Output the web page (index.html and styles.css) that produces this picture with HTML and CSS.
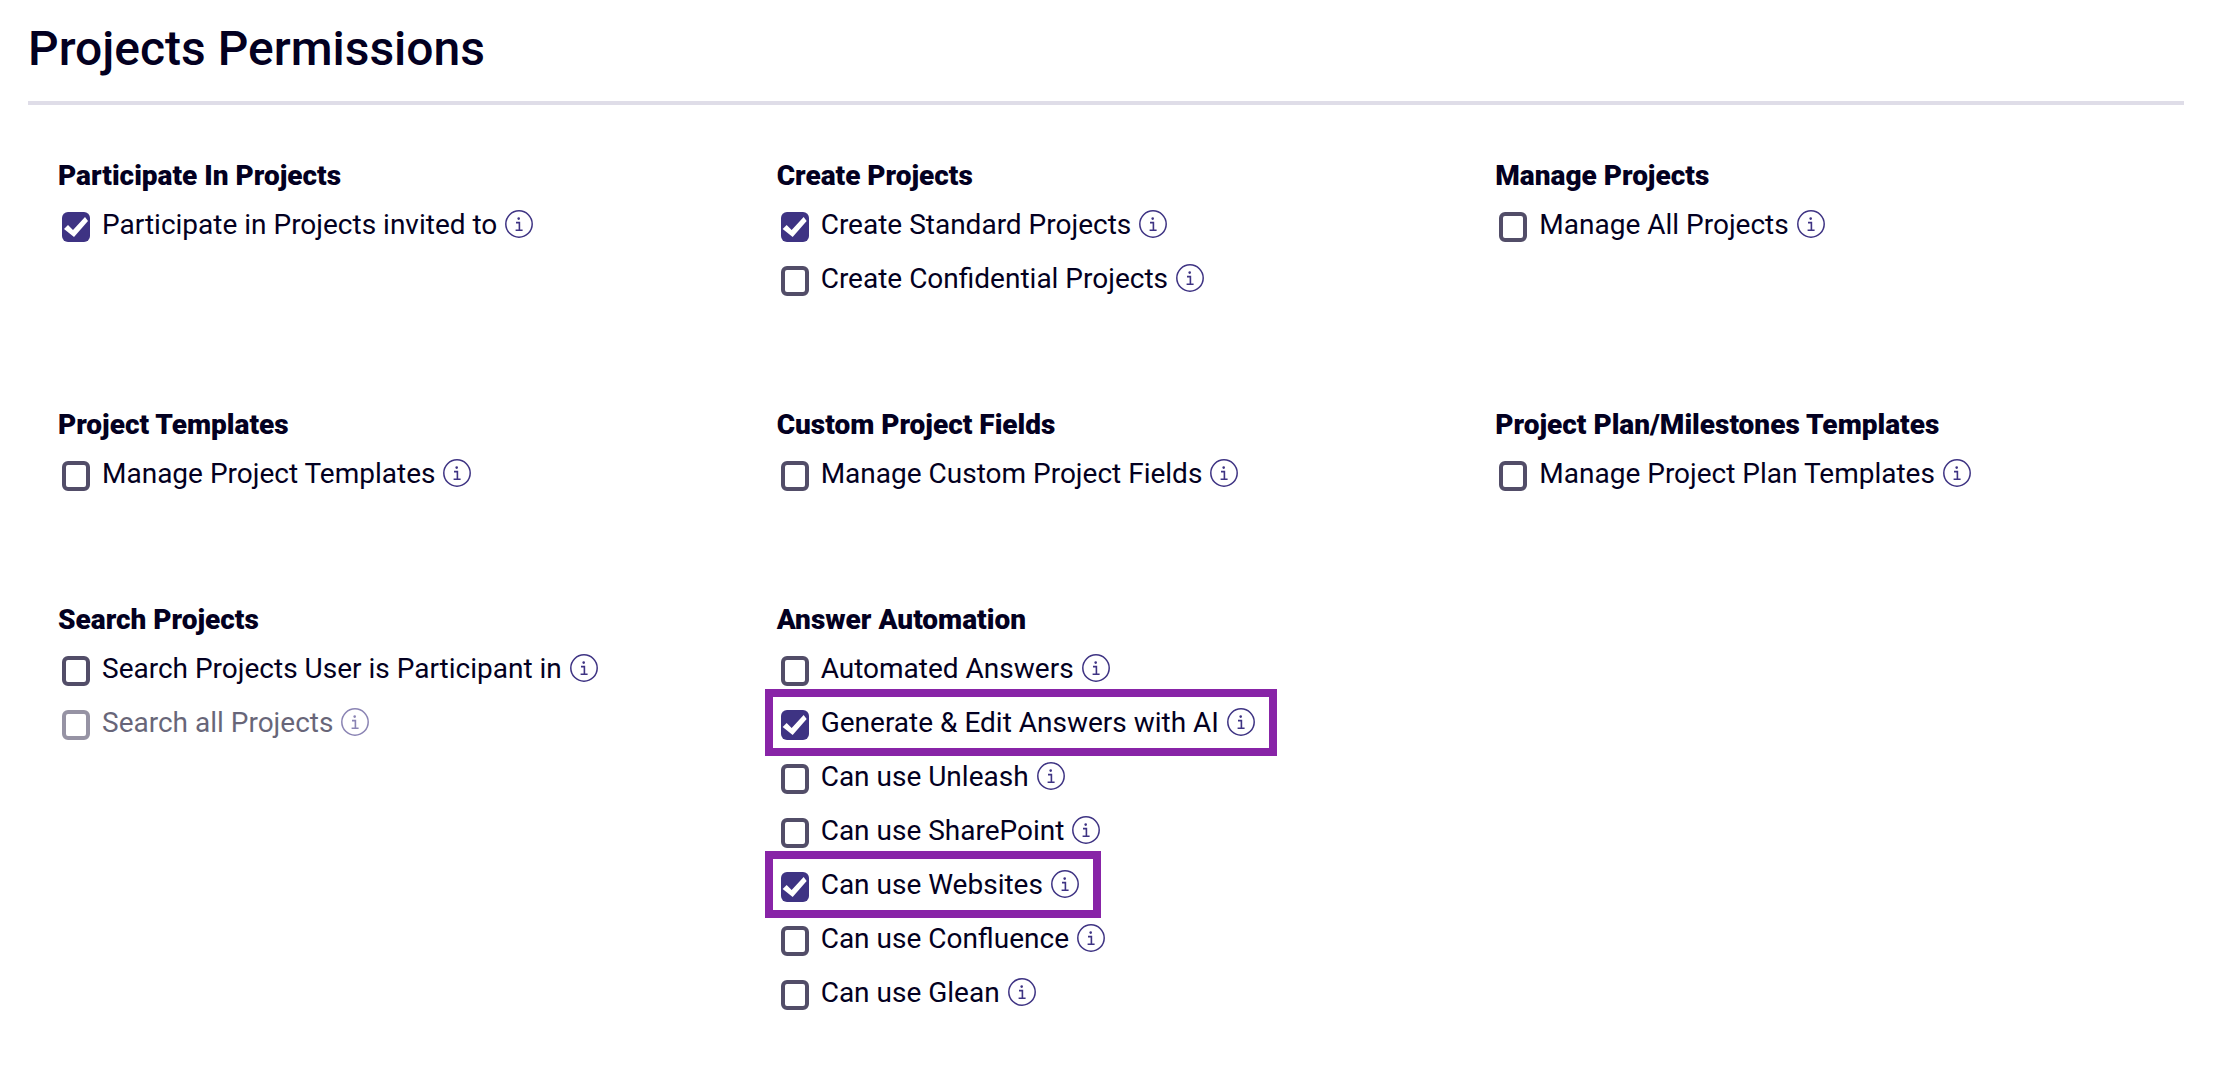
FILE: index.html
```html
<!DOCTYPE html>
<html lang="en">
<head>
<meta charset="utf-8">
<meta name="viewport" content="width=device-width, initial-scale=1">
<title>Projects Permissions</title>
<link rel="stylesheet" href="styles.css">
</head>
<body>
<svg class="sprite" aria-hidden="true">
  <symbol id="info" viewBox="0 0 28 28">
    <circle cx="14" cy="14" r="13.2" fill="none" stroke="currentColor" stroke-width="1.5"/>
    <circle cx="13.7" cy="8.6" r="1.3" fill="currentColor"/>
    <path d="M11 12.6h3.4v7.6M10.6 20.2h7" fill="none" stroke="currentColor" stroke-width="1.6"/>
  </symbol>
</svg>
<main class="page">
  <h1 class="page-title">Projects Permissions</h1>
  <div class="groups">
    <section class="group">
      <h2 class="group-title">Participate In Projects</h2>
      <ul class="permissions">
        <li class="permission"><input class="check" type="checkbox" id="participate" checked><label for="participate">Participate in Projects invited to</label><button class="info" type="button"><svg class="icon"><use href="#info"/></svg></button></li>
      </ul>
    </section>
    <section class="group">
      <h2 class="group-title">Create Projects</h2>
      <ul class="permissions">
        <li class="permission"><input class="check" type="checkbox" id="standard" checked><label for="standard">Create Standard Projects</label><button class="info" type="button"><svg class="icon"><use href="#info"/></svg></button></li>
        <li class="permission"><input class="check" type="checkbox" id="confidential"><label for="confidential">Create Confidential Projects</label><button class="info" type="button"><svg class="icon"><use href="#info"/></svg></button></li>
      </ul>
    </section>
    <section class="group">
      <h2 class="group-title">Manage Projects</h2>
      <ul class="permissions">
        <li class="permission"><input class="check" type="checkbox" id="manage-all"><label for="manage-all">Manage All Projects</label><button class="info" type="button"><svg class="icon"><use href="#info"/></svg></button></li>
      </ul>
    </section>
    <section class="group">
      <h2 class="group-title">Project Templates</h2>
      <ul class="permissions">
        <li class="permission"><input class="check" type="checkbox" id="templates"><label for="templates">Manage Project Templates</label><button class="info" type="button"><svg class="icon"><use href="#info"/></svg></button></li>
      </ul>
    </section>
    <section class="group">
      <h2 class="group-title">Custom Project Fields</h2>
      <ul class="permissions">
        <li class="permission"><input class="check" type="checkbox" id="fields"><label for="fields">Manage Custom Project Fields</label><button class="info" type="button"><svg class="icon"><use href="#info"/></svg></button></li>
      </ul>
    </section>
    <section class="group">
      <h2 class="group-title">Project Plan/Milestones Templates</h2>
      <ul class="permissions">
        <li class="permission"><input class="check" type="checkbox" id="plans"><label for="plans">Manage Project Plan Templates</label><button class="info" type="button"><svg class="icon"><use href="#info"/></svg></button></li>
      </ul>
    </section>
    <section class="group">
      <h2 class="group-title">Search Projects</h2>
      <ul class="permissions">
        <li class="permission"><input class="check" type="checkbox" id="search-own"><label for="search-own">Search Projects User is Participant in</label><button class="info" type="button"><svg class="icon"><use href="#info"/></svg></button></li>
        <li class="permission is-disabled"><input class="check" type="checkbox" id="search-all" disabled><label for="search-all">Search all Projects</label><button class="info" type="button"><svg class="icon"><use href="#info"/></svg></button></li>
      </ul>
    </section>
    <section class="group">
      <h2 class="group-title">Answer Automation</h2>
      <ul class="permissions">
        <li class="permission"><input class="check" type="checkbox" id="automated"><label for="automated">Automated Answers</label><button class="info" type="button"><svg class="icon"><use href="#info"/></svg></button></li>
        <li class="permission is-highlighted"><input class="check" type="checkbox" id="ai" checked><label for="ai">Generate &amp; Edit Answers with AI</label><button class="info" type="button"><svg class="icon"><use href="#info"/></svg></button></li>
        <li class="permission"><input class="check" type="checkbox" id="unleash"><label for="unleash">Can use Unleash</label><button class="info" type="button"><svg class="icon"><use href="#info"/></svg></button></li>
        <li class="permission"><input class="check" type="checkbox" id="sharepoint"><label for="sharepoint">Can use SharePoint</label><button class="info" type="button"><svg class="icon"><use href="#info"/></svg></button></li>
        <li class="permission is-highlighted"><input class="check" type="checkbox" id="websites" checked><label for="websites">Can use Websites</label><button class="info" type="button"><svg class="icon"><use href="#info"/></svg></button></li>
        <li class="permission"><input class="check" type="checkbox" id="confluence"><label for="confluence">Can use Confluence</label><button class="info" type="button"><svg class="icon"><use href="#info"/></svg></button></li>
        <li class="permission"><input class="check" type="checkbox" id="glean"><label for="glean">Can use Glean</label><button class="info" type="button"><svg class="icon"><use href="#info"/></svg></button></li>
      </ul>
    </section>
  </div>
</main>
</body>
</html>
```

FILE: styles.css
```css
* {
  box-sizing: border-box;
}

body {
  margin: 0;
  background: #fff;
  color: #030021;
  font-family: Roboto, "Liberation Sans", sans-serif;
  font-size: 28px;
  line-height: 34px;
}

.sprite {
  display: none;
}

.page {
  padding: 21px 36px 56px 28px;
}

.page-title {
  margin: 0;
  padding-bottom: 24px;
  border-bottom: 4px solid #dfdde8;
  font-size: 48px;
  font-weight: 500;
  line-height: 56px;
}

.groups {
  display: grid;
  grid-template-columns: repeat(3, 1fr);
  row-gap: 112px;
  padding-top: 54px;
}

.group {
  padding-left: 30px;
}

.group-title {
  margin: 0 0 15px;
  font-size: 28px;
  font-weight: 900;
}

.permissions {
  display: flex;
  flex-direction: column;
  align-items: flex-start;
  gap: 20px;
  margin: 0;
  padding: 0 0 0 4px;
  list-style: none;
}

.permission {
  position: relative;
  display: flex;
  align-items: flex-start;
}

.check {
  appearance: none;
  flex: none;
  width: 28px;
  height: 30px;
  margin: 4px 12px 0 0;
  border: 4px solid #524d68;
  border-radius: 6px;
  background: #fff;
}

.check:checked {
  border: 0;
  background: #3e3383;
}

.check:checked::before {
  content: "";
  display: block;
  width: 28px;
  height: 30px;
  background: #fff;
  clip-path: polygon(2px 17px, 6px 13px, 11px 18px, 23px 5px, 26px 9px, 12px 25px);
}

.info {
  flex: none;
  margin: 2px 0 0 8px;
  padding: 0;
  border: 0;
  background: none;
  color: #3e3383;
}

.icon {
  display: block;
  width: 28px;
  height: 28px;
}

.is-disabled {
  opacity: 0.6;
}

/* Frame drawn around a permission without moving its neighbours */
.is-highlighted::after {
  content: "";
  position: absolute;
  inset: -17px -22px -16px -16px;
  border: 8px solid #8824a7;
  pointer-events: none;
}
```
